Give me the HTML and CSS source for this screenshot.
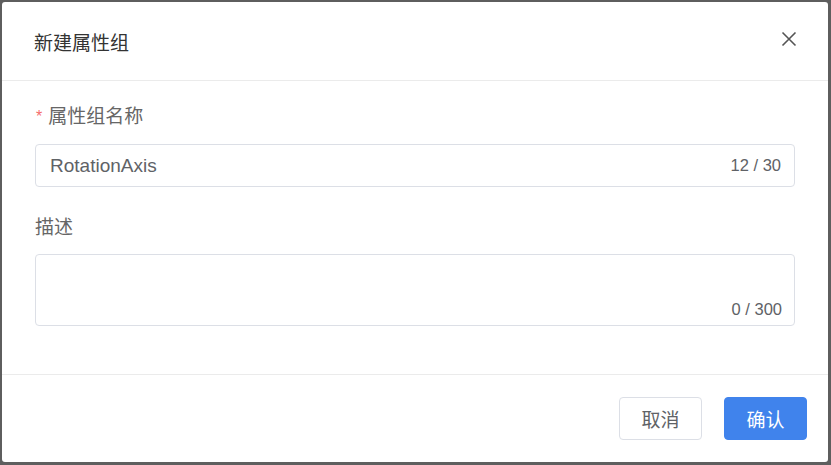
FILE: index.html
```html
<!DOCTYPE html>
<html lang="zh">
<head>
<meta charset="utf-8">
<link rel="stylesheet" href="styles.css">
</head>
<body>
<div class="dialog">
  <div class="header">
    <span class="title">新建属性组</span>
    <svg class="close" width="16" height="16" viewBox="0 0 16 16"><path d="M1.5 1.5 L14.5 14.5 M14.5 1.5 L1.5 14.5" stroke="#555" stroke-width="1.6" fill="none"/></svg>
  </div>
  <div class="body">
    <div class="label"><span class="req">*</span>属性组名称</div>
    <div class="input">
      <span class="value">RotationAxis</span>
      <span class="count">12 / 30</span>
    </div>
    <div class="label label2">描述</div>
    <div class="textarea">
      <span class="count">0 / 300</span>
    </div>
  </div>
  <div class="footer">
    <button class="btn">取消</button>
    <button class="btn primary">确认</button>
  </div>
</div>
</body>
</html>
```

FILE: styles.css
```css
html, body { margin: 0; padding: 0; }
body {
  width: 831px;
  height: 465px;
  background: #5e5e5e;
  font-family: "Liberation Sans", Arial, "Noto Sans CJK SC", sans-serif;
  overflow: hidden;
  padding: 2px 3px 3px 2px;
  box-sizing: border-box;
}
.dialog {
  background: #fff;
  width: 826px;
  height: 460px;
  border-radius: 3px;
  display: flex;
  flex-direction: column;
}
.header {
  height: 79px;
  flex: none;
  box-sizing: border-box;
  border-bottom: 1px solid #ebebeb;
  display: flex;
  align-items: center;
  justify-content: space-between;
  padding: 0 32px 0 32px;
}
.title { font-size: 19px; color: #333; }
.close { margin-right: -1px; margin-top: -4px; }
.body {
  flex: none;
  padding: 24px 33px 0 33px;
  height: 294px;
  box-sizing: border-box;
  border-bottom: 1px solid #ebebeb;
}
.label {
  font-size: 19px;
  color: #666;
  height: 24px;
  line-height: 24px;
  margin-bottom: 15px;
}
.req { color: #f56c6c; margin-right: 6px; margin-left: 1px; font-size: 16px; vertical-align: 1px; }
.label2 { margin-top: 29px; margin-bottom: 14px; }
.input {
  height: 43px;
  border: 1px solid #dcdfe6;
  border-radius: 4px;
  box-sizing: border-box;
  display: flex;
  align-items: center;
  justify-content: space-between;
  padding: 0 13px 0 14px;
}
.value { font-size: 19px; color: #606266; }
.count { font-size: 16.5px; color: #606266; }
.textarea {
  height: 72px;
  border: 1px solid #dcdfe6;
  border-radius: 4px;
  box-sizing: border-box;
  display: flex;
  align-items: flex-end;
  justify-content: flex-end;
  padding: 0 12px 6px 0;
}
.footer {
  flex: 1;
  display: flex;
  justify-content: flex-end;
  align-items: flex-start;
  gap: 22px;
  padding: 22px 21px 0 0;
}
.btn {
  width: 83px;
  height: 43px;
  border: 1px solid #dcdfe6;
  background: #fff;
  border-radius: 4px;
  font-size: 19px;
  color: #606266;
  font-family: inherit;
  padding: 0;
}
.primary {
  background: #4083ec;
  border-color: #4083ec;
  color: #fff;
}
```
